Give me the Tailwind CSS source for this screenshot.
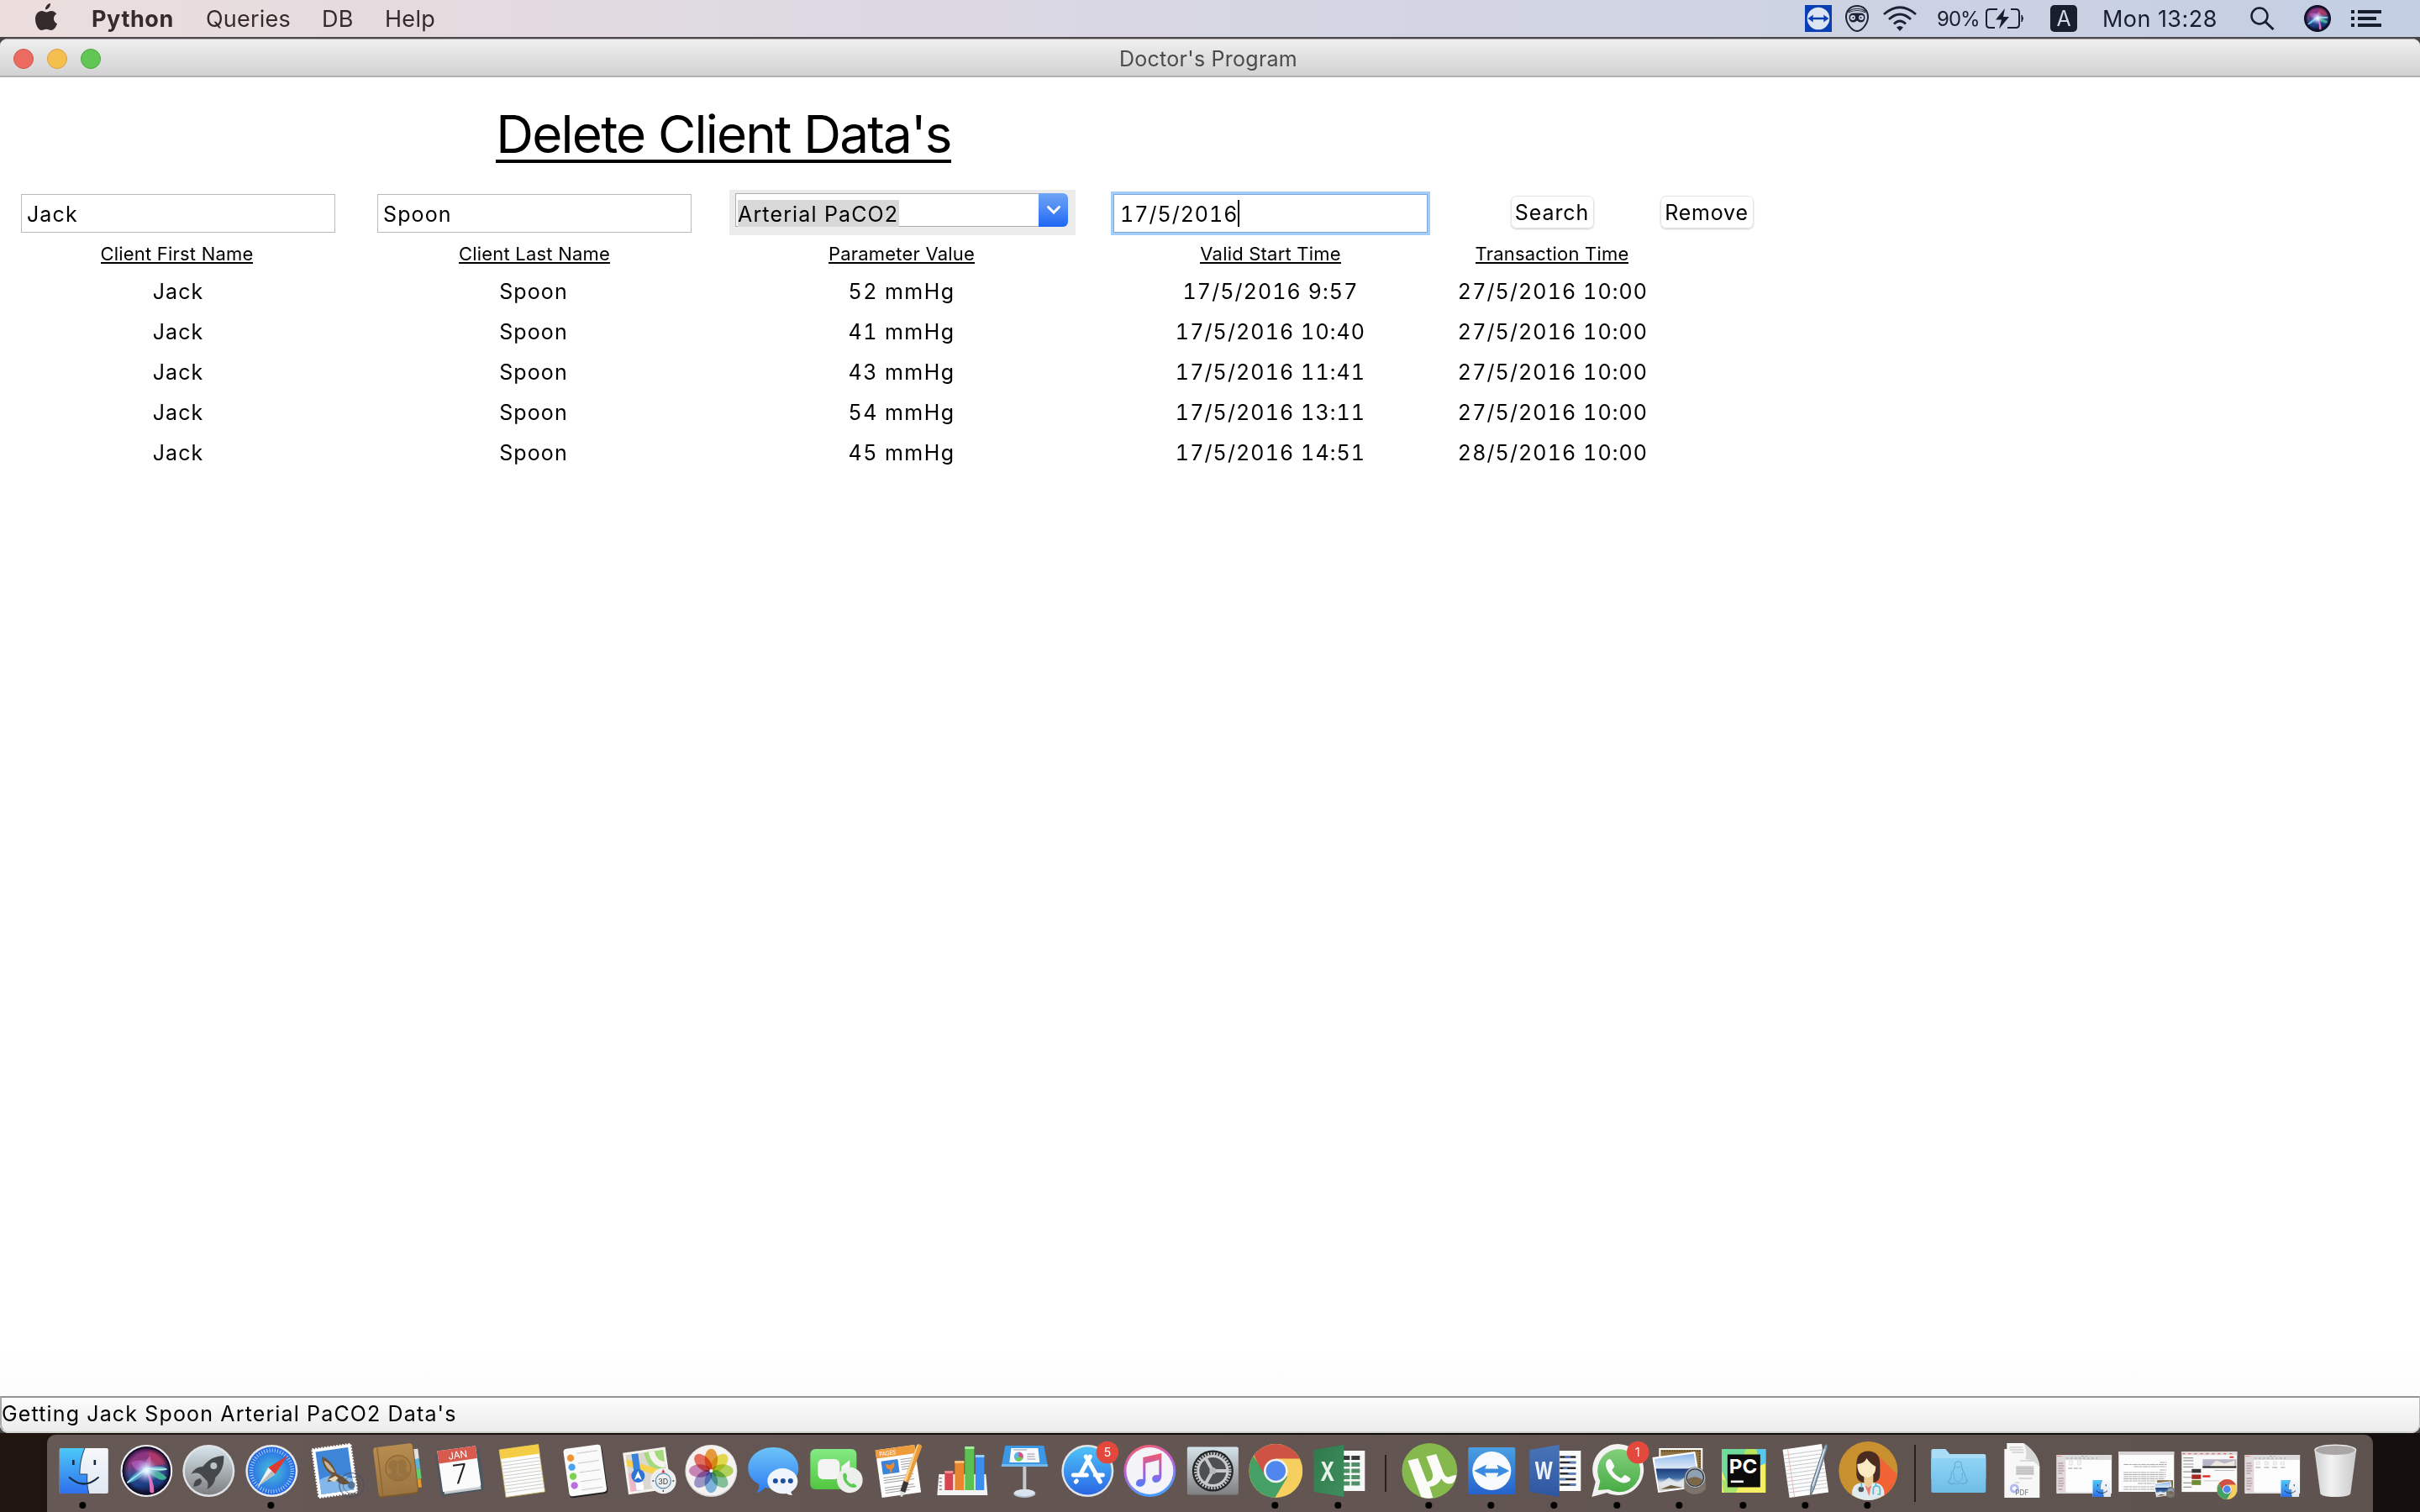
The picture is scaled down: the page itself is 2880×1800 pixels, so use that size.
<!DOCTYPE html>
<html lang="en">
<head>
<meta charset="utf-8">
<title>Doctor's Program</title>
<script src="https://cdn.jsdelivr.net/npm/@tailwindcss/browser@4"></script>
</head>
<body class="w-[2880px] h-[1800px] overflow-hidden bg-[#17100e] font-[Inter,'Liberation_Sans',sans-serif] text-black">

<!-- shared gradients and symbols -->
<svg class="absolute w-0 h-0">
  <defs>
    <linearGradient id="blue" x1="0" y1="0" x2="0" y2="1"><stop offset="0" stop-color="#4ec3f8"/><stop offset="1" stop-color="#2a66e4"/></linearGradient>
    <linearGradient id="msg" x1="0" y1="0" x2="0" y2="1"><stop offset="0" stop-color="#6cc4f8"/><stop offset="1" stop-color="#2f7cf2"/></linearGradient>
    <linearGradient id="tvbox" x1="0" y1="0" x2="0" y2="1"><stop offset="0" stop-color="#4a9fe2"/><stop offset="1" stop-color="#2563cc"/></linearGradient>
    <linearGradient id="finderL" x1="0" y1="0" x2="0" y2="1"><stop offset="0" stop-color="#4cc9f8"/><stop offset="1" stop-color="#2f6fee"/></linearGradient>
    <linearGradient id="finderR" x1="0" y1="0" x2="0" y2="1"><stop offset="0" stop-color="#f6f8fb"/><stop offset="1" stop-color="#dfe8f2"/></linearGradient>
    <linearGradient id="gray" x1="0" y1="0" x2="0" y2="1"><stop offset="0" stop-color="#d5e3ea"/><stop offset="1" stop-color="#7e7f80"/></linearGradient>
    <linearGradient id="green" x1="0" y1="0" x2="0" y2="1"><stop offset="0" stop-color="#84ea84"/><stop offset="1" stop-color="#52c640"/></linearGradient>
    <linearGradient id="wagreen" x1="0" y1="0" x2="0" y2="1"><stop offset="0" stop-color="#83cf7c"/><stop offset="1" stop-color="#49ac45"/></linearGradient>
    <linearGradient id="ring" x1="0" y1="0" x2=".3" y2="1"><stop offset="0" stop-color="#f8605a"/><stop offset=".5" stop-color="#c060d8"/><stop offset="1" stop-color="#4a9cf8"/></linearGradient>
    <linearGradient id="note" x1="0" y1="0" x2="0" y2="1"><stop offset="0" stop-color="#f25a6a"/><stop offset=".6" stop-color="#a060e0"/><stop offset="1" stop-color="#4a80f8"/></linearGradient>
    <linearGradient id="folder" x1="0" y1="0" x2="0" y2="1"><stop offset="0" stop-color="#8fd4f5"/><stop offset="1" stop-color="#6fbde6"/></linearGradient>
    <linearGradient id="trash" x1="0" y1="0" x2="1" y2="0"><stop offset="0" stop-color="#cfcfd1"/><stop offset=".4" stop-color="#f2f2f3"/><stop offset="1" stop-color="#c9c9cb"/></linearGradient>
    <linearGradient id="sea" x1="0" y1="0" x2="0" y2="1"><stop offset="0" stop-color="#8db8ee"/><stop offset=".38" stop-color="#dce8f6"/><stop offset=".42" stop-color="#1f3f7c"/><stop offset=".65" stop-color="#3d6ca4"/><stop offset=".78" stop-color="#dbe4ec"/><stop offset="1" stop-color="#9a8a74"/></linearGradient>
    <linearGradient id="brown" x1="0" y1="0" x2="0" y2="1"><stop offset="0" stop-color="#b88c50"/><stop offset="1" stop-color="#9c7541"/></linearGradient>
    <linearGradient id="word" x1="0" y1="0" x2="0" y2="1"><stop offset="0" stop-color="#4a74b8"/><stop offset="1" stop-color="#2d56a0"/></linearGradient>
    <linearGradient id="excel" x1="0" y1="0" x2="1" y2="1"><stop offset="0" stop-color="#2f7a4c"/><stop offset="1" stop-color="#3f8e5e"/></linearGradient>
    <radialGradient id="safari"><stop offset="0" stop-color="#4cc4d8"/><stop offset="1" stop-color="#2467e6"/></radialGradient>
    <linearGradient id="siri" x1=".35" y1="0" x2=".5" y2="1"><stop offset="0" stop-color="#8c3088"/><stop offset=".3" stop-color="#8a3a7c"/><stop offset=".55" stop-color="#3a4a8c"/><stop offset=".8" stop-color="#1d3f86"/><stop offset="1" stop-color="#15163a"/></linearGradient>
    <radialGradient id="siriGlow"><stop offset="0" stop-color="#fff"/><stop offset=".25" stop-color="#d8f0ff" stop-opacity=".9"/><stop offset="1" stop-color="#a890f0" stop-opacity="0"/></radialGradient>
    <radialGradient id="siriEdge"><stop offset=".75" stop-color="#0c0a24" stop-opacity="0"/><stop offset="1" stop-color="#0c0a24" stop-opacity=".9"/></radialGradient>

    <symbol id="finder" viewBox="0 0 58 54" overflow="visible">
      <rect width="58" height="54" rx="2" fill="url(#finderR)"/>
      <path d="M2 0H30C26 10 24 20 24 31H33C32.500 39 33 47 35 54H2Q0 54 0 52V2Q0 0 2 0Z" fill="url(#finderL)"/>
      <path d="M30 0C26 10 24 20 24 31H33C32.500 39 33 47 35 54" fill="none" stroke="#22405f" stroke-width="1"/>
      <path d="M16.500 14V20M42 14V20" stroke="#152a44" stroke-width="2.600"/>
      <path d="M12 35Q29 50 46 35" fill="none" stroke="#152a44" stroke-width="2.200" stroke-linecap="round"/>
    </symbol>
    <symbol id="chrome" viewBox="-32 -32 64 64">
      <circle r="32" fill="#f7cf5e"/>
      <path d="M-26 -18.500A32 32 0 0 1 28.500 -14.500H0L-14 7Z" fill="#cf5344"/>
      <path d="M-26.500 -17.500A32 32 0 0 0 -1 32L14 7L0 0L-13.500 4Z" fill="#45a065"/>
      <circle r="14.300" fill="#f2f2f2"/><circle r="11.700" fill="#4f87ee"/>
    </symbol>
    <symbol id="tv" viewBox="-16 -16 32 32">
      <rect x="-16" y="-16" width="32" height="32" fill="#0a3fb4"/>
      <circle r="13.300" fill="#dde4f2"/>
      <path d="M-12.500 0L-6 -4.500L-6.500 -1.300H6.500L6 -4.500L12.500 0L6 4.500L6.500 1.300H-6.500L-6 4.500Z" fill="#0a3fb4"/>
    </symbol>
    <symbol id="siriball" viewBox="-31 -31 62 62">
      <circle r="31" fill="#eeeef2"/><circle r="28.700" fill="#17142f"/><circle r="27" fill="url(#siri)"/>
      <path d="M2 -24Q20 -26 25 -9Q14 -6 4 -6Z" fill="#c23c5c" opacity=".6"/>
      <circle r="28.700" fill="url(#siriEdge)"/>
      <path d="M-18 -10Q-8 -16 2 -8Q7 -4 2 0Q-14 4 -18 -10Z" fill="#c46ad8" opacity=".55"/>
      <path d="M4 -18Q8 -8 1 0Q-6 -6 4 -18Z" fill="#e070c0" opacity=".6"/>
      <path d="M-23 14Q-16 2 0 -4Q-4 10 -23 15Z" fill="#4cc8e0" opacity=".7"/>
      <path d="M0 -3Q16 -8 25 -2Q16 2 2 0Z" fill="#6cd8d0" opacity=".75"/>
      <path d="M0 -1Q16 -2 24 8Q22 12 15 10Q6 6 0 -1Z" fill="#45c49a" opacity=".85"/>
      <path d="M0 0Q9 10 9 25Q7 28 4 25Q4 10 0 0Z" fill="#f078c0" opacity=".9"/>
      <circle r="15" fill="url(#siriGlow)"/>
      <path d="M-23 14Q-10 5 0 -3M0 -3Q14 -1 24 -2" stroke="#d8fff8" stroke-width="1.600" fill="none" opacity=".8"/>
    </symbol>
    <symbol id="preview" viewBox="0 0 64 58">
      <path d="M8 1H60V46H8Z" fill="#fff"/><path d="M10 3H58V44H10Z" fill="#8f7345"/>
      <path d="M11 4.500H57M56.500 4V30" fill="none" stroke="#5c4622" stroke-width="2" stroke-dasharray="1.500 1.500"/>
      <path d="M0 12L51 5L58 47L7 54Z" fill="#fff"/>
      <path d="M2.500 14L49.500 7.500L55.500 45.500L8.500 52Z" fill="url(#sea)"/>
      <path d="M8 44L20 36L30 42L42 33L55 41L55.500 45.500L8.500 52Z" fill="#e6ebee" opacity=".8"/>
      <path d="M10 50L22 45L36 48Z" fill="#6b5a42"/>
      <path d="M38 36V50Q51 62 63.500 50V36Z" fill="#7d756b"/>
      <circle cx="51" cy="36" r="12.500" fill="#35383b"/><circle cx="51" cy="36" r="11.500" fill="none" stroke="#b9bdc0" stroke-width="1.400"/>
      <circle cx="51" cy="36" r="9.500" fill="#8ea2b4"/><path d="M42 38Q51 32 60 39Q57 45 51 45.500Q44 45 42 38Z" fill="#7c6647"/>
    </symbol>
    <symbol id="finderwin" viewBox="0 0 66 46">
      <rect width="66" height="46" fill="#fdfdfd"/><rect width="66" height="6" fill="#dcdadb"/>
      <rect y="6" width="11" height="39" fill="#e3d8da"/>
      <path d="M1 1.500H6" stroke="#e0605a" stroke-width="1.200" stroke-dasharray="1.200 .8"/>
      <path d="M30 1.500H36M12 4H50" stroke="#999" stroke-width="1" stroke-dasharray="2 3"/>
      <path d="M2 10H8M2 13H9M2 16H8M2 19H9M2 22H7M2 28H9M2 31H8M2 34H9M2 37H8M2 41H7" stroke="#a08b90" stroke-width="1"/>
      <path d="M2 45H64" stroke="#ccc" stroke-width="1.200"/>
    </symbol>
  </defs>
</svg>

<!-- menu bar -->
<header class="h-11 flex items-center justify-between bg-linear-to-r from-[#ecdedd] via-[#dbd8e3] via-40% to-[#c4cfe3] text-[27px] leading-[44px] whitespace-nowrap">
  <nav class="flex items-center pl-[41px] text-[#352a2c]">
    <svg class="w-7 h-8 mr-10 -mt-1" viewBox="0 0 28 32"><path d="M19 0C19.200 4 16 7.500 13 7.300C12.700 4 15.800.4 19 0ZM20 9C22.800 9 25 10.600 26.300 12.500C21.300 15.500 22.200 22 27 24.200C26 27.500 23 32 20 32C17.600 32 17 30.700 14.200 30.700C11.300 30.700 10.500 32 8.400 32C5 32 1 25.500 1 18.700C1 12.500 4.800 9 8.600 9C11 9 12.600 10.400 14.400 10.400C16 10.400 17.700 9 20 9Z" fill="#352a2c"/></svg>
    <span class="w-[136px] pt-0.5 font-bold tracking-[0.6px]">Python</span>
    <span class="w-[138px] pt-0.5 tracking-[0.2px]">Queries</span>
    <span class="w-[75px] pt-0.5 tracking-[0.2px]">DB</span>
    <span class="pt-0.5 tracking-[0.3px]">Help</span>
  </nav>
  <div class="flex items-center pr-[46px] text-[#171e2e]">
    <svg class="w-8 h-8 mr-4"><use href="#tv"/></svg>
    <svg class="w-7 h-8 mr-[17px]" viewBox="0 0 28 32" fill="none" stroke="#1b2233" stroke-width="2"><path d="M14 1C21 1 27 6 27 14C27 22 20 31 14 31C8 31 1 22 1 14C1 6 7 1 14 1Z"/><path d="M3.500 7.500Q14 1 24.500 7.500M3.500 9Q14 4 24.500 9" stroke-width="1.200"/><path d="M10 9.500H18Q23.500 9.500 23.500 15Q23.500 20.500 18 20.500Q16 20.500 14 18.500Q12 20.500 10 20.500Q4.500 20.500 4.500 15Q4.500 9.500 10 9.500Z" fill="#1b2233" stroke="none"/><circle cx="9" cy="15" r="3" fill="#cbd3e6" stroke="none"/><circle cx="19" cy="15" r="3" fill="#cbd3e6" stroke="none"/><circle cx="9.500" cy="15" r="1" fill="#1b2233" stroke="none"/><circle cx="18.500" cy="15" r="1" fill="#1b2233" stroke="none"/></svg>
    <svg class="w-10 h-[30px] mr-6" viewBox="0 0 40 30" fill="none" stroke="#1b2233" stroke-width="2.800"><path d="M1 10Q20 -6.500 39 10M7 16Q20 4 33 16M13 21.500Q20 14.500 27 21.500"/><path d="M16 25.500Q20 22.500 24 25.500L20 30Z" fill="#1b2233" stroke="none"/></svg>
    <span class="w-[58px] pt-px text-2xl leading-[44px] tracking-[-1px]">90%</span>
    <svg class="w-[47px] h-6 mr-[30px]" viewBox="0 0 47 24" fill="none" stroke="#171e2e" stroke-width="2"><path d="M14 1H5Q1 1 1 5V19Q1 23 5 23H11M30 1H36Q40 1 40 5V19Q40 23 36 23H26"/><path d="M43 8Q46 12 43 16Z" fill="#171e2e" stroke-width="1"/><path d="M23 0L12 13.500H19L16 24.500L28 10H21Z" fill="#171e2e" stroke="none"/></svg>
    <span class="w-8 h-8 mr-8 rounded-[5px] bg-[#171e2e] text-[#d0d7e8] text-[25px] leading-8 text-center">A</span>
    <span class="w-[176px] -ml-0.5 pt-0.5 tracking-[0.45px]">Mon 13:28</span>
    <svg class="w-[29px] h-7 mr-[35px]" viewBox="0 0 29 28" fill="none" stroke="#171e2e" stroke-width="2.500"><circle cx="11" cy="11" r="9.500"/><path d="M18 18L27.500 27" stroke-width="3"/></svg>
    <svg class="w-8 h-8 mr-6"><use href="#siriball"/><circle cx="16" cy="16" r="14.800" fill="none" stroke="#10122a" stroke-width="2.500"/></svg>
    <svg class="w-9 h-[22px]" viewBox="0 0 36 22" fill="#171e2e"><path d="M0 1h4v4H0zM0 9h4v4H0zM0 17h4v4H0zM8 1h28v4H8zM8 9h22v4H8zM8 17h28v4H8z"/></svg>
  </div>
</header>
<div class="bg-[#4a4248]">
<!-- application window -->
<main class="h-[1662px] flex flex-col bg-white overflow-hidden rounded-[10px] border-t-2 border-t-[#4c464c]">
  <div class="h-[46px] shrink-0 relative flex items-center justify-center rounded-t-lg border-t border-t-[#b0adad] border-b-2 border-b-[#b0b0b0] bg-linear-to-b from-[#efefef] to-[#d2d2d2] text-[25px] text-[#4b4b4b]">
    <div class="absolute left-4 top-[11px] flex gap-4">
      <i class="size-6 rounded-full bg-[#ec6b60] border border-[#d35349]"></i>
      <i class="size-6 rounded-full bg-[#f5bf4f] border border-[#d9a13b]"></i>
      <i class="size-6 rounded-full bg-[#61c654] border border-[#4aa73d]"></i>
    </div>
    <span class="-ml-1 pt-[5px] tracking-[0.25px]">Doctor's Program</span>
  </div>

  <div class="w-[1722px] h-[130px] shrink-0 flex justify-center">
    <h1 class="mt-[30px] h-[72px] leading-[76px] text-[62px] tracking-[-1.800px] border-b-4 border-black whitespace-nowrap">Delete Client Data's</h1>
  </div>

  <form class="shrink-0 h-[66px] grid grid-cols-[424px_424px_452px_424px_246px_122px] justify-items-center text-[25px] tracking-[1.100px]">
    <div class="w-[374px] h-[46px] mt-[9px] border border-[#b9b9b9] pl-[6px] leading-[47px]">Jack</div>
    <div class="w-[374px] h-[46px] mt-[9px] border border-[#b9b9b9] pl-[6px] leading-[47px]">Spoon</div>
    <div class="w-[412px] h-[54px] mt-1 bg-[#ececec] pl-[7px] pt-1 flex items-start">
      <div class="w-[361px] h-10 border border-r-0 border-[#adadad] bg-white pl-[2px] pt-[7px]">
        <div class="w-48 h-8 bg-[#d8d8d8] leading-[34px] whitespace-nowrap tracking-[1.150px]">Arterial PaCO2</div>
      </div>
      <div class="w-[35px] h-10 rounded-r-[6px] bg-linear-to-b from-[#70a5f4] to-[#1f66f5] flex items-center justify-center">
        <svg class="w-4 h-2.5" viewBox="0 0 16 10"><path d="M1.500 1.500L8 8L14.500 1.500" fill="none" stroke="#fff" stroke-width="3" stroke-linecap="round"/></svg>
      </div>
    </div>
    <div class="w-[380px] h-[52px] mt-[6px] border-[3px] border-[#a5cdf9]">
      <div class="h-[46px] border border-[#7ba7dc] pl-[7px] pt-[6px] flex">
        <span class="w-[140px] leading-[35px] tabular-nums tracking-[1px] whitespace-nowrap">17/5/2016</span><i class="w-[2px] h-8 bg-black"></i>
      </div>
    </div>
    <div class="w-[99px] h-[39px] mt-[11px] rounded-[7px] border border-[#e4e4e4] shadow-[0_1px_2px_rgba(0,0,0,0.2)] text-center leading-[38px] tracking-[.9px]">Search</div>
    <div class="w-[111px] h-[39px] mt-[11px] rounded-[7px] border border-[#e4e4e4] shadow-[0_1px_2px_rgba(0,0,0,0.2)] text-center leading-[38px] tracking-[.8px]">Remove</div>
  </form>

  <section class="shrink-0 w-[1970px] text-[25px] leading-[48px]">
    <div class="h-[35px] grid grid-cols-[424px_424px_452px_424px_246px] justify-items-center text-[22px] leading-[28px] tracking-[.2px] whitespace-nowrap">
      <span class="h-[26px] -ml-[3px] border-b-2 border-black">Client First Name</span>
      <span class="h-[26px] border-b-2 border-black">Client Last Name</span>
      <span class="h-[26px] -ml-[2px] border-b-2 border-black">Parameter Value</span>
      <span class="h-[26px] border-b-2 border-black">Valid Start Time</span>
      <span class="h-[26px] border-b-2 border-black">Transaction Time</span>
    </div>
    <div class="grid grid-cols-[424px_422px_454px_424px_248px] text-center tabular-nums tracking-[1.100px] [&>:nth-child(5n+3)]:tracking-[1.450px]">
      <span>Jack</span><span>Spoon</span><span>52 mmHg</span><span>17/5/2016 9:57</span><span>27/5/2016 10:00</span>
      <span>Jack</span><span>Spoon</span><span>41 mmHg</span><span>17/5/2016 10:40</span><span>27/5/2016 10:00</span>
      <span>Jack</span><span>Spoon</span><span>43 mmHg</span><span>17/5/2016 11:41</span><span>27/5/2016 10:00</span>
      <span>Jack</span><span>Spoon</span><span>54 mmHg</span><span>17/5/2016 13:11</span><span>27/5/2016 10:00</span>
      <span>Jack</span><span>Spoon</span><span>45 mmHg</span><span>17/5/2016 14:51</span><span>28/5/2016 10:00</span>
    </div>
  </section>

  <footer class="mt-auto shrink-0 h-[104px] flex flex-col justify-end bg-linear-to-b from-white to-[#fafafa]">
    <div class="h-11 border-t-2 border-t-[#939393] border-l-2 border-l-[#a9a9a9] border-r border-r-[#bbb] border-b-2 border-b-[#d2d4d0] rounded-b-[10px] bg-linear-to-b from-[#fcfcfc] to-[#ececec] text-[25px] leading-[39px] tracking-[1.140px]">Getting Jack Spoon Arterial PaCO2 Data's</div>
  </footer>
</main>
</div>

<!-- dock -->
<div class="h-[94px] pt-0.5 bg-linear-to-r from-[#21150f] via-[#0f0b08] to-[#150f0e]">
<div class="ml-14 w-[2768px] h-[92px] pl-[5.700px] rounded-t-[10px] bg-linear-to-r from-[#665854] to-[#5f5350] flex items-start">
  <div class="w-[1568px] grid grid-cols-21">
    <svg class="w-full h-[92px]" viewBox="-37.330 -43 74.670 92"><use href="#finder" x="-28.500" y="-27" width="58" height="54"/><circle cx="-1" cy="41" r="4"/></svg>
    <svg class="w-full h-[92px]" viewBox="-37.330 -43 74.670 92"><use href="#siriball" x="-30" y="-31" width="62" height="62"/></svg>
    <svg class="w-full h-[92px]" viewBox="-37.330 -43 74.670 92"><circle r="31" fill="#dfe3e5"/><circle r="28.500" fill="url(#gray)"/><path d="M18 -18Q3 -18 -7 -5Q-16 -5 -21 4Q-15 1 -10 4L-3 11Q1 14 -2 22Q7 17 8 8Q19 -2 18 -18Z" fill="#44484b"/><circle cx="6" cy="-6" r="4" fill="#b8c4ca"/><path d="M-10 9Q-18 10 -18 19Q-9 18 -8 12Z" fill="#44484b"/></svg>
    <svg class="w-full h-[92px]" viewBox="-37.330 -43 74.670 92"><circle r="31" fill="#e6e9ec"/><circle r="28.500" fill="url(#safari)"/><circle r="24.500" fill="none" stroke="#cfe4f8" stroke-width="4.500" stroke-dasharray=".8 2.400"/><path d="M19 -18L4 4L-4 -4Z" fill="#e0392f"/><path d="M-17 19L4 4L-4 -4Z" fill="#f2f2f2"/><path d="M-17 19L4 4L0 0Z" fill="#b9bdc2"/><circle cx="-1" cy="41" r="4"/></svg>
    <svg class="w-full h-[92px]" viewBox="-38.330 -43 74.670 92"><g transform="rotate(-8)"><rect x="-23" y="-29" width="46" height="58" fill="#fff" stroke="#fff" stroke-width="2.500" stroke-dasharray="2 1.600"/><rect x="-19.500" y="-25.500" width="39" height="51" fill="#3f86d8"/><path d="M-19.500 8Q0 0 19.500 12V25.500H-19.500Z" fill="#83b7ea"/><path d="M-13 -19Q-14 -4 -4 4Q-10 8 -10 12L0 11Q6 20 16 17Q10 8 2 4Q-2 -14 -13 -19Z" fill="#6d5237"/><path d="M-11 -14Q-10 -4 -3 1L0 2Q-4 -10 -11 -14Z" fill="#c9b698"/><path d="M-9 9L0 6L3 9L-2 13Z" fill="#ead9bb"/></g><circle cx="20" cy="17" r="14.500" fill="none" stroke="#4d4f5c" stroke-width="1.500" opacity=".65"/><circle cx="20" cy="17" r="10" fill="none" stroke="#4d4f5c" stroke-width="1" opacity=".65"/><circle cx="20" cy="17" r="4.500" fill="#3d5578" opacity=".7"/></svg>
    <svg class="w-full h-[92px]" viewBox="-36.330 -43 74.670 92"><g transform="rotate(-7)"><path d="M23 -23h6v12h-6z" fill="#dfe2e3"/><path d="M23 -11h6v12h-6z" fill="#59b4d8"/><path d="M23 1h6v12h-6z" fill="#63cf6b"/><path d="M23 13h5v10h-5z" fill="#e79a2b"/><rect x="-24" y="-30" width="48" height="60" rx="3.500" fill="#7b5a2c"/><rect x="-24" y="-30.500" width="47" height="58.500" rx="3.500" fill="url(#brown)"/><path d="M-19 -30V28" stroke="#8a652f" stroke-width="1.200"/><circle cx="3" cy="-3" r="15" fill="#a87f46" stroke="#8f6a35" stroke-width="1.400"/><path d="M-10 6Q-10 3 -7 2Q-5 1 -6 -1Q-9 -4 -8 -8Q-7 -13 -2 -13Q3 -13 3 -8Q3 -13 8 -13Q13 -12 13 -7Q13 -3 12 0Q12 2 14 3Q17 5 15 6Q10 11.500 3 11.500Q-5 11 -10 6Z" fill="#987340"/><path d="M3 -8Q4 -2 1 1Q2 5 6 6" fill="none" stroke="#a87f46" stroke-width="1.200"/></g></svg>
    <svg class="w-full h-[92px]" viewBox="-37.330 -43 74.670 92"><g transform="rotate(-8)"><path d="M-26 -22H26V27H-26Z" fill="#4b5761"/><path d="M-22 -24H22V25H-22Z" fill="#c9cdcf"/><path d="M-23.500 -27H22.500V20L20 22H-23.500Z" fill="#fbfbfb"/><path d="M-23.500 -27H22.500V-12H-23.500Z" fill="#d85b50"/><text x="0" y="-15" font-size="11.500" fill="#fff" text-anchor="middle">JAN</text><text x="0" y="15" font-size="32" font-weight="300" fill="#222" text-anchor="middle">7</text></g></svg>
    <svg class="w-full h-[92px]" viewBox="-37.330 -43 74.670 92"><g transform="rotate(-8)"><rect x="-23.500" y="-28.500" width="47" height="57" fill="#fcfcfa" stroke="#bda55a" stroke-width=".8"/><rect x="-23.500" y="-28.500" width="47" height="11" fill="#f5cc45"/><path d="M-23 -13H23M-23 -9H23M-23 -5H23M-23 -1H23M-23 3H23M-23 7H23M-23 11H23M-23 15H23M-23 19H23M-23 23H23" stroke="#c9cacb" stroke-width=".9"/></g></svg>
    <svg class="w-full h-[92px]" viewBox="-37.330 -43 74.670 92"><g transform="rotate(-8)"><rect x="-22.500" y="-27" width="46" height="57" rx="4" fill="#222"/><rect x="-22.500" y="-29" width="45" height="57" rx="4" fill="#fafafa"/><path d="M-7 -22H18M-7 -10H18M-7 1H18M-7 12H18M-7 22H18" stroke="#c8c8c8" stroke-width="1"/><circle cx="-15" cy="-17.500" r="4.200" fill="#f09433"/><circle cx="-15" cy="-6.500" r="4.200" fill="#4aa4f4"/><circle cx="-15" cy="4.500" r="4.200" fill="#7bd24b"/><circle cx="-15" cy="15.500" r="4.200" fill="#bb70de"/></g></svg>
    <svg class="w-full h-[92px]" viewBox="-37.330 -43 74.670 92"><g transform="translate(-2 0) rotate(-8)"><rect x="-25" y="-25" width="51" height="50" fill="#f5f3ee"/><rect x="-22" y="-22" width="45" height="44" fill="#dcd8cf"/><path d="M0 -22H23V7Q3 5 0 -22Z" fill="#a4d97c"/><path d="M9 -22Q10 -7 23 -4" fill="none" stroke="#f4f2ec" stroke-width="7"/><path d="M-22 -9L23 12V4L-22 -17Z" fill="#f7d24d"/><path d="M-22 0H-14V22H-22Z" fill="#f0b8c6"/><path d="M-15 -22H-7V22H-15Z" fill="#3b82da"/><path d="M-15 10H-6V22H-15Z" fill="#fff"/></g><circle cx="-12" cy="6" r="8" fill="#2f74d4"/><path d="M-12 0L-7.500 11L-12 8L-16.500 11Z" fill="#fff"/><circle cx="18" cy="12" r="15.300" fill="#eeeff0"/><circle cx="18" cy="12" r="9" fill="none" stroke="#5e8cab" stroke-width="1.300"/><text x="18" y="15.500" font-size="9" text-anchor="middle" fill="#333">3D</text><path d="M16 2L18 -2L20 2Z" fill="#e03030"/><path d="M5 12h2M29 12h2M18 23v2" stroke="#444" stroke-width="1.400"/></svg>
    <svg class="w-full h-[92px]" viewBox="-38.330 -43 74.670 92"><circle r="31" fill="#d4d2d0"/><circle r="30" cy="-.5" fill="#f3f2f0"/><g><ellipse class="mix-blend-multiply" cy="-13.500" rx="7.800" ry="12.800" fill="#f2a040"/><ellipse class="mix-blend-multiply" cy="-13.500" rx="7.800" ry="12.800" fill="#efe450" transform="rotate(45)"/><ellipse class="mix-blend-multiply" cy="-13.500" rx="7.800" ry="12.800" fill="#bcdc60" transform="rotate(90)"/><ellipse class="mix-blend-multiply" cy="-13.500" rx="7.800" ry="12.800" fill="#88cba4" transform="rotate(135)"/><ellipse class="mix-blend-multiply" cy="-13.500" rx="7.800" ry="12.800" fill="#84bce8" transform="rotate(180)"/><ellipse class="mix-blend-multiply" cy="-13.500" rx="7.800" ry="12.800" fill="#a49cd2" transform="rotate(225)"/><ellipse class="mix-blend-multiply" cy="-13.500" rx="7.800" ry="12.800" fill="#d08cc0" transform="rotate(270)"/><ellipse class="mix-blend-multiply" cy="-13.500" rx="7.800" ry="12.800" fill="#ee7464" transform="rotate(315)"/></g><circle r="2" fill="#fff"/></svg>
    <svg class="w-full h-[92px]" viewBox="-37.330 -43 74.670 92"><path d="M0 -28C17 -28 30 -17 30 -3C30 11 17 21 0 21Q-6 21 -10 20Q-14 25 -20 26Q-16 21 -17 16C-25 12 -30 5 -30 -3C-30 -17 -17 -28 0 -28Z" fill="url(#msg)"/><path d="M11 -3C21 -3 29 4 29 12C29 18 26 22 21 25Q21 27 23 29Q18 29 16 27C3 29 -7 21 -7 12C-7 4 1 -3 11 -3Z" fill="#f0f5fb"/><circle cx="2.500" cy="12" r="3" fill="#1d4f9e"/><circle cx="11.500" cy="12" r="3" fill="#1d4f9e"/><circle cx="20.500" cy="12" r="3" fill="#1d4f9e"/></svg>
    <svg class="w-full h-[92px]" viewBox="-37.330 -43 74.670 92"><rect x="-31" y="-26" width="55" height="48" rx="6" fill="url(#green)"/><rect x="-22" y="-14" width="26" height="24" rx="6" fill="#f4f4f4"/><path d="M6 -5L16 -13V8H6Z" fill="#f4f4f4"/><circle cx="16" cy="11" r="15.300" fill="#ecefeb"/><path d="M8 4Q10 1 12 4L13 7Q12 9 12 10Q14 14 18 16L20 15Q25 17 24 19Q21 21 16 19Q7 13 8 4Z" fill="#5bcb52"/></svg>
    <svg class="w-full h-[92px]" viewBox="-37.330 -43 74.670 92"><g transform="rotate(-8)"><rect x="-24" y="-28" width="47" height="57" fill="#fdfdfd"/><rect x="-24" y="-28" width="47" height="10" fill="#ee9b3a"/><text x="-20" y="-20" font-size="7.500" fill="#fff" textLength="20" lengthAdjust="spacingAndGlyphs">PAGES</text><rect x="-19" y="-14" width="20" height="16" fill="#3d84d8"/><path d="M-14 -10L-9 -8L-4 -11Q-3 -4 -8 -3V1H-10V-3Q-15 -4 -14 -10Z" fill="#ee8a2a"/><path d="M4 -13H18M4 -10H17M4 -7H18M4 -4H16M4 -1H18M-19 6H17M-19 9H15M-19 12H17M-19 18H16M-19 21H17M-19 24H10" stroke="#999" stroke-width=".9"/></g><path d="M22 -31Q26 -33 28 -29L12 14L6 12Z" fill="#e99a3c"/><path d="M22 -31L24 -32L9 13L6 12Z" fill="#f8cf8c"/><path d="M6 12L12 14L8 26L2 24Z" fill="#3a3635"/><path d="M2 24L8 26L4 31Q2 31 2 29Z" fill="#ddd"/></svg>
    <svg class="w-full h-[92px]" viewBox="-38.330 -43 74.670 92"><path d="M-28 4H28L30 29H-30Z" fill="#f4f4f5"/><path d="M-26 8V26" stroke="#888" stroke-width="3" stroke-dasharray="1.500 3"/><rect x="-21" y="0" width="10" height="23" fill="#d64550"/><rect x="-21" y="0" width="10" height="3" fill="#f08a90"/><rect x="-9" y="-12" width="11" height="35" fill="#e8862f"/><rect x="-9" y="-12" width="11" height="3" fill="#f8c27c"/><rect x="3" y="-29" width="11" height="52" fill="#5cc150"/><rect x="3" y="-29" width="11" height="3" fill="#a9eba0"/><rect x="15.500" y="-19" width="10.500" height="42" fill="#3b8df0"/><rect x="15.500" y="-19" width="10.500" height="3" fill="#95d0fa"/></svg>
    <svg class="w-full h-[92px]" viewBox="-37.330 -43 74.670 92"><rect x="-2" y="-6" width="4" height="34" fill="#c3c9cf"/><ellipse cy="27" rx="13" ry="5" fill="#b8c6d6"/><ellipse cy="26" rx="12" ry="4" fill="#dbe4ee"/><path d="M-23 -30H23L27.500 -6H-27.500Z" fill="#3b98e4"/><path d="M-27.500 -8H27.500V-5H-27.500Z" fill="#75b8ec"/><path d="M-16 -27H16L18 -10H-18Z" fill="#f7f9fb"/><circle cx="-7" cy="-17" r="5.500" fill="#55b8e8"/><path d="M-7 -17V-22.500A5.500 5.500 0 0 1 -2 -15Z" fill="#d94f8a"/><path d="M-7 -17L-2 -15A5.500 5.500 0 0 1 -11 -13Z" fill="#74c94f"/><path d="M3 -20H12M3 -17H12M3 -14H13M-13 -25H3" stroke="#99a" stroke-width="1"/></svg>
    <svg class="w-full h-[92px] overflow-visible" viewBox="-38.330 -43 74.670 92"><circle r="31" fill="#e2e4e6"/><circle r="28.500" fill="url(#blue)"/><path d="M-9 5L3 -17M-2 -17L15 13M-17 5H-1M9 5H18M-13 12L-14 13" stroke="#fff" stroke-width="5" stroke-linecap="round" fill="none"/><circle cx="23.500" cy="-22" r="13.300" fill="#e2483c"/><text x="23.500" y="-17" font-size="14.500" fill="#fff" text-anchor="middle">5</text></svg>
    <svg class="w-full h-[92px]" viewBox="-37.330 -43 74.670 92"><circle r="31" fill="url(#ring)"/><circle r="28" fill="#f4f4f8"/><path d="M-8 -16L14 -21V7Q13 14 7 14Q2 13 3 8Q5 4 11 5V-13L-5 -9V12Q-6 19 -12 19Q-18 18 -16 13Q-14 9 -8 10Z" fill="url(#note)"/></svg>
    <svg class="w-full h-[92px]" viewBox="-37.330 -43 74.670 92"><rect x="-30.500" y="-28.500" width="61" height="57" rx="2" fill="url(#gray)"/><circle r="24.500" fill="#232425"/><circle r="20.500" fill="none" stroke="#b9bbbc" stroke-width="3.500" stroke-dasharray="2.200 1.380"/><circle r="17.500" fill="#4d5052" stroke="#c9cbcc" stroke-width="3"/><path d="M0 0H17M0 0L-8.500 -15M0 0L-8.500 15" stroke="#c6c8c9" stroke-width="4"/><circle r="4" fill="#b6b8b9"/></svg>
    <svg class="w-full h-[92px]" viewBox="-37.330 -43 74.670 92"><use href="#chrome" x="-31" y="-32" width="64" height="64"/><circle cy="41" r="4"/></svg>
    <svg class="w-full h-[92px]" viewBox="-38.330 -43 74.670 92"><rect x="0" y="-24" width="31" height="48" fill="#f6f7f6"/><path d="M5 -15.500H13M15 -15.500H25" stroke="#383a39" stroke-width="5"/><path d="M5 -7.500H13M15 -7.500H25M5 0H13M15 0H25M5 7.500H13M15 7.500H25M5 15H13M15 15H25" stroke="#4f9068" stroke-width="5"/><path d="M-30 -25L6 -31V31L-30 25Z" fill="url(#excel)"/><text x="-13.500" y="11.500" font-size="31" font-weight="700" textLength="17" lengthAdjust="spacingAndGlyphs" fill="#e9f3ec" text-anchor="middle">X</text><circle cx="-1" cy="41" r="4"/></svg>
  </div>
  <i class="w-0.5 h-11 mt-6 ml-[18px] mr-[14px] bg-[#2b1f1d]"></i>
  <div class="w-[597.300px] grid grid-cols-8">
    <svg class="w-full h-[92px]" viewBox="-37.330 -43 74.670 92"><circle r="33" fill="#85b84d"/><path d="M-26 -12L-14 -15L-3 13Q6 12 3 1L-4 -17L8 -20L16 1Q19 9 24 7Q28 5 32 5Q31 12 27 15Q18 17 14 9Q10 18 0 19L4 32Q-3 34 -10 31Z" fill="#fbfbf8"/><circle cx="-1" cy="41" r="4"/></svg>
    <svg class="w-full h-[92px]" viewBox="-37.330 -43 74.670 92"><rect x="-28" y="-28" width="56" height="56" rx="2" fill="url(#tvbox)"/><circle r="23" fill="#f8fafc"/><path d="M-21 0L-6 -7.500L-8 -2.500H8L6 -7.500L21 0L6 7.500L8 2.500H-8L-6 7.500Z" fill="#3b8be0"/><circle cx="-1" cy="41" r="4"/></svg>
    <svg class="w-full h-[92px]" viewBox="-37.330 -43 74.670 92"><rect x="0" y="-24" width="31" height="48" fill="#fbfbfb"/><path d="M6 -16.500H25M6 -10H25M6 -3.300H25M6 3.300H25M6 10H25M6 16.500H25" stroke="#2b2b2e" stroke-width="2.600"/><path d="M12 -16.500H19M18 -10H25M10 -3.300H15M16 3.300H25M6 10H13M18 16.500H25" stroke="#5a7fc0" stroke-width="2.600"/><path d="M-30 -25L5.500 -31V31L-30 25Z" fill="url(#word)"/><text x="-13" y="10" font-size="28" font-weight="700" textLength="22" lengthAdjust="spacingAndGlyphs" fill="#eef2fa" text-anchor="middle">W</text><circle cx="-1" cy="41" r="4"/></svg>
    <svg class="w-full h-[92px] overflow-visible" viewBox="-37.330 -43 74.670 92"><path d="M-31 31L-26.500 13A30.500 30.500 0 1 1 -13 26Z" fill="#f1f2f1"/><path d="M-23.500 23L-21 12A25.500 25.500 0 1 1 -11 22Z" fill="url(#wagreen)"/><path d="M-14 -10Q-11 -16 -8 -13L-4 -6Q-4 -4 -7 -1Q-3 6 4 9L8 5Q10 5 15 9Q16 12 10 14Q4 16 -6 8Q-16 -2 -14 -10Z" fill="#fafafa"/><circle cx="24" cy="-22" r="13.300" fill="#e2483c"/><text x="23.500" y="-17" font-size="14.500" fill="#fff" text-anchor="middle">1</text><circle cx="-1" cy="41" r="4"/></svg>
    <svg class="w-full h-[92px]" viewBox="-37.330 -43 74.670 92"><use href="#preview" x="-33" y="-28" width="64" height="58"/><circle cx="-1" cy="41" r="4"/></svg>
    <svg class="w-full h-[92px]" viewBox="-38.330 -43 74.670 92"><rect x="-26" y="-26" width="52" height="52" fill="#f6ef62"/><path d="M-26 -26H16L-10 26H-26Z" fill="#6fdc9c"/><path d="M-26 26V0L-16 26Z" fill="#f6ef62"/><path d="M3 -26H16L24 -8H-6Z" fill="#b7e65e"/><path d="M15 -26H26V-9L19 -6Z" fill="#56c8ea"/><path d="M-26 10L-6 18L-10 26H-24Z" fill="#a8e36c"/><rect x="-19.500" y="-19.500" width="39" height="39" fill="#0b0b0b"/><text x="-17.500" y="3" font-size="23.500" font-weight="700" textLength="33.500" lengthAdjust="spacingAndGlyphs" fill="#fff">PC</text><rect x="-15.500" y="11.500" width="15" height="2.600" fill="#fff"/><circle cx="-1" cy="41" r="4"/></svg>
    <svg class="w-full h-[92px]" viewBox="-37.330 -43 74.670 92"><g transform="rotate(-8)"><rect x="-24" y="-29" width="47" height="58" fill="#fcfcfc"/><path d="M-24 -22H23M-24 -17.500H23M-24 -13H23M-24 -8.500H23M-24 -4H23M-24 .5H23M-24 5H23M-24 9.500H23M-24 14H23M-24 18.500H23M-24 23H23" stroke="#c5c9cc" stroke-width="1"/><path d="M-18 -29V29" stroke="#eab8b5" stroke-width="1"/></g><path d="M22 -30Q26 -34 25 -27L10 20L5 31L6 18Z" fill="#8fa9bf" stroke="#5b6873" stroke-width="1"/><path d="M22 -26L8 18" stroke="#dce9f4" stroke-width="1.500"/><circle cx="-1" cy="41" r="4"/></svg>
    <svg class="w-full h-[92px]" viewBox="-37.330 -43 74.670 92"><circle r="35" fill="#c9902f"/><path d="M10 -20L34 4Q31 25 13 32.500L2 10Z" fill="#f16335"/><path d="M-14 -8Q-14 -23 0 -23.500Q14 -23 14 -8V4Q14 13 6 14H-6Q-14 12 -14 4Z" fill="#4a2c20"/><path d="M-5 5H6V17L0 21L-5 17Z" fill="#eacb92"/><path d="M-13 -8Q-4 -9 -2 -15Q3 -8 9 -5Q9 5 1 8Q-13 8 -13 -8Z" fill="#faeac4"/><path d="M-19 29Q-21 15 -6 14L0 20L6 14Q20 15 19 29Q0 41 -19 29Z" fill="#dfeaee"/><path d="M-4 17L0 20L4 17L1 30Z" fill="#f07a70"/><circle cx="-8.500" cy="22" r="3.300" fill="#4b555c"/><path d="M-8 14V20M9 14V18M6 28V22Q6 18 10 18Q14 18 14 22V28H11" stroke="#56b9cf" stroke-width="1.700" fill="none"/><circle cx="-1" cy="41" r="4"/></svg>
  </div>
  <i class="w-0.5 h-[68px] mt-3 ml-[17px] mr-[13.500px] bg-[#2b1f1d]"></i>
  <div class="w-[522.700px] grid grid-cols-7">
    <svg class="w-full h-[92px]" viewBox="-37.330 -43 74.670 92"><path d="M-32 -24Q-32 -26 -30 -26H-15L-10 -20H31Q33 -20 33 -18V10H-32Z" fill="#a9dcf6"/><path d="M-32 -15H33V24Q33 26 31 26H-30Q-32 26 -32 24Z" fill="url(#folder)"/><path d="M-4 -7Q-4 -11 0 -11Q4 -11 4 -7Q4 -2 8 4Q9 10 11 12Q8 17 4 15H-4Q-8 17 -12 13Q-8 9 -8 3Q-4 -2 -4 -7Z" fill="none" stroke="#5fabd4" stroke-width="1.100"/><path d="M-3 -5Q0 -3 3 -5M-5 2Q-6 12 0 13Q6 12 5 2" fill="none" stroke="#5fabd4" stroke-width=".9"/></svg>
    <svg class="w-full h-[92px]" viewBox="-38.330 -43 74.670 92"><path d="M-18 -33H2Q20 -20 21 -5V32H-21V-26H-18Z" fill="#f7f7f7"/><path d="M2 -33Q7 -22 4 -14Q14 -14 21 -4Q19 -22 2 -33Z" fill="#d7d7d7"/><path d="M-15 -28H1M-14 -25H2M-12 -22H2M-2 -12H13M-4 9H12M-8 14H-3" stroke="#bbb" stroke-width="1.200"/><path d="M-7 -6H14V5H-7Z" fill="#d3d3d3"/><path d="M-7 -3H14M-7 0H14M-7 3H14" stroke="#aaa" stroke-width=".8"/><circle cx="-9" cy="21" r="4" fill="none" stroke="#b3bcf0" stroke-width="3"/><text x="-8" y="28.500" font-size="9.500" fill="#777" textLength="16" lengthAdjust="spacingAndGlyphs">PDF</text></svg>
    <svg class="w-full h-[92px]" viewBox="-37.330 -43 74.670 92"><use href="#finderwin" x="-33" y="-19" width="66" height="46"/><path d="M-18 -12h4v5h-4zM-8 -12h4v5h-4z" fill="#f4f4f4" stroke="#ccc" stroke-width=".5"/><path d="M-19 -3H-3" stroke="#999" stroke-width="1.200" stroke-dasharray="5 1.500"/><svg x="10" y="11" width="22" height="20" viewBox="0 0 58 54" preserveAspectRatio="none"><use href="#finder" width="58" height="54"/></svg></svg>
    <svg class="w-full h-[92px]" viewBox="-37.330 -43 74.670 92"><rect x="-33" y="-23" width="66" height="48" fill="#fcfcfc"/><rect x="-33" y="-23" width="66" height="4" fill="#d8d4d3"/><path d="M16 -10H24M-27 -7.500H24M-15 -5H24M16 -1H24M-27 2H23M-27 4.500H23M-27 7H23M-27 9.500H22M-27 12H23M-10 15H23M-27 19H20M-27 22H12" stroke="#aaa" stroke-width="1.100" stroke-dasharray="6 .7 3 .7"/><use href="#preview" x="9" y="10" width="25" height="23"/></svg>
    <svg class="w-full h-[92px]" viewBox="-37.330 -43 74.670 92"><g transform="translate(0 -2.200) scale(1 .828)"><rect x="-33" y="-25" width="66" height="58" fill="#fafafa"/><rect x="-33" y="-25" width="66" height="5" fill="#ddd9da"/><path d="M-32 -22H30" stroke="#d9706c" stroke-width="1.500" stroke-dasharray="3 4"/><rect x="-8" y="-14" width="40" height="12" fill="#b9b6c8"/><path d="M0 -3L8 -12L18 -8L30 -12V-3Z" fill="#efe8e0"/><rect x="-8" y="-4" width="40" height="2.500" fill="#222"/><rect x="24" y="-18" width="5" height="2" fill="#e22"/><path d="M-31 -16H-19M-31 -12H-19M-31 -7H-19M-31 -3H-19M-31 4H-21M-31 12H-21M-31 20H-21M-31 26H-21" stroke="#999" stroke-width="1.400"/><rect x="-21" y="0" width="11" height="5.500" fill="#3c3a38"/><rect x="-21" y="8" width="11" height="6.500" fill="#a52722"/><rect x="-21" y="16" width="11" height="7" fill="#718a35"/><rect x="-8" y="9" width="9" height="3" fill="#e32a2a"/><path d="M6 2H30M-7 17H12" stroke="#bbb" stroke-width="1.200"/></g><use href="#chrome" x="9" y="10" width="24" height="24"/></svg>
    <svg class="w-full h-[92px]" viewBox="-37.330 -43 74.670 92"><use href="#finderwin" x="-33" y="-19" width="66" height="46"/><path d="M-19 -11h4v4h-4zM-9 -11h4v4h-4zM1 -11h4v4h-4zM10 -11h4v4h-4z" fill="#f4f4f4" stroke="#ccc" stroke-width=".5"/><path d="M-20 -4H15" stroke="#999" stroke-width="1.200" stroke-dasharray="6 4"/><svg x="10" y="11" width="22" height="20" viewBox="0 0 58 54" preserveAspectRatio="none"><use href="#finder" width="58" height="54"/></svg></svg>
    <svg class="w-full h-[92px]" viewBox="-37.330 -43 74.670 92"><path d="M-25 -25L-18 27Q-16 31 0 31Q16 31 18 27L25 -25Z" fill="url(#trash)"/><ellipse cy="-25" rx="25" ry="6.500" fill="#e9e9ea"/><ellipse cy="-24.500" rx="23.500" ry="5.500" fill="#aaa6a6"/></svg>
  </div>
</div>
</div>
</body>
</html>
